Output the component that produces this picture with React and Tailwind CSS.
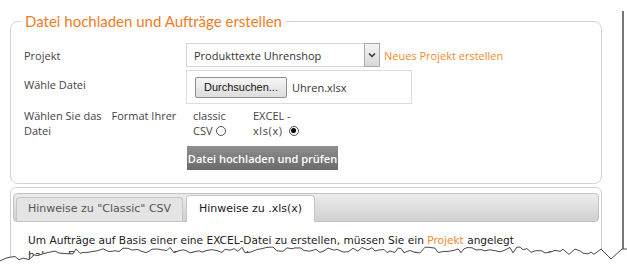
import React from "react";

function Radio({ checked }) {
  return (
    <span className="ml-[3px] inline-flex h-[10px] w-[10px] items-center justify-center rounded-full border border-[#555] bg-white">
      {checked && <span className="h-[5px] w-[5px] rounded-full bg-black" />}
    </span>
  );
}

function tornPoints() {
  const pts = [];
  let seed = 11;
  const rnd = () => {
    seed = (seed * 9301 + 49297) % 233280;
    return seed / 233280;
  };
  for (let x = 0; x <= 596; x += 3 + Math.floor(rnd() * 4)) {
    const base = 10 + 10 * Math.max(0, 1 - x / 90) + (x > 540 ? (x - 540) * 0.05 : 0);
    pts.push([x, base + (rnd() - 0.5) * 6]);
  }
  pts.push([601, 9], [611, 19], [622, 9], [627, 9]);
  return pts;
}

function TornEdge() {
  const pts = tornPoints();
  const line = pts.map((p) => p.join(",")).join(" ");
  const fill = line + " 627,27 0,27";
  return (
    <svg className="absolute left-0 top-[240px]" width="627" height="27" viewBox="0 0 627 27">
      <polygon points={fill} fill="#ffffff" />
      <polyline points={line} fill="none" stroke="#4a4a4a" strokeWidth="1" />
    </svg>
  );
}

export default function App() {
  return (
    <div className="relative h-[267px] w-[627px] overflow-hidden bg-white [font-family:'Open_Sans',sans-serif]">
      <div className="mt-[3px] h-[264px] w-[624px] border-r-2 border-[#777]">

        {/* ============ UPLOAD ============ */}
        <fieldset className="ml-[10px] mt-[11px] w-[592px] rounded-[8px] border border-[#d2d2d2] px-[13px] pb-[13px] pt-[12px]">
          <legend className="-ml-[3px] px-[4px] text-[15px] leading-[20px] text-[#f07d1f] [font-family:'Lato',sans-serif]">
            Datei hochladen und Aufträge erstellen
          </legend>

          <div className="grid grid-cols-[162px_1fr] gap-y-[3px] text-[11px] leading-[15px] text-[#444]">
            {/* projekt */}
            <div className="self-center">Projekt</div>
            <div className="flex items-center">
              <div className="flex h-[24px] w-[194px] items-center justify-between border border-[#d5d5d5] bg-white pl-[7px] text-[#333]">
                <span>Produkttexte Uhrenshop</span>
                <span className="-mr-px flex h-[24px] w-[16px] items-center justify-center border border-[#a8a8a8] bg-gradient-to-b from-[#f4f4f4] to-[#d8d8d8]">
                  <svg width="8" height="6" viewBox="0 0 8 6">
                    <path d="M1 1.5 L4 4.5 L7 1.5" fill="none" stroke="#333" strokeWidth="1.5" />
                  </svg>
                </span>
              </div>
              <a className="ml-[4px] text-[#f08a2e]">Neues Projekt erstellen</a>
            </div>

            {/* datei */}
            <div className="pt-[7px]">Wähle Datei</div>
            <div>
              <div className="flex h-[34px] w-[226px] items-center border border-[#dcdcdc] pl-[8px]">
                <span className="flex h-[21px] items-center rounded-[2px] border border-[#8e8e8e] bg-gradient-to-b from-[#f6f6f6] to-[#dddddd] px-[8px] text-[11px] text-[#111] [font-family:'Liberation_Sans',sans-serif]">
                  Durchsuchen...
                </span>
                <span className="ml-[5px] text-[#333]">Uhren.xlsx</span>
              </div>
            </div>

            {/* format */}
            <div className="pt-[1px]">
              <span>Wählen Sie das</span>
              <span className="ml-[10px]">Format Ihrer</span>
              <br />
              <span>Datei</span>
            </div>
            <div className="flex pl-[7px] pt-[1px]">
              <div className="w-[60px]">
                <div>classic</div>
                <div className="flex items-center">CSV<Radio /></div>
              </div>
              <div>
                <div>EXCEL -</div>
                <div className="flex items-center">
                  <span className="tracking-[0.6px]">xls(x)</span>
                  <span className="ml-[3px] flex"><Radio checked /></span>
                </div>
              </div>
            </div>

            {/* button */}
            <div />
            <div className="pt-[5px]">
              <button className="ml-[1px] h-[24px] w-[151px] bg-gradient-to-b from-[#8f8f8f] to-[#6a6a6a] text-[11px] font-semibold text-white">
                Datei hochladen und prüfen
              </button>
            </div>
          </div>
        </fieldset>

        {/* ============ TABS ============ */}
        <div className="ml-[10px] mt-[3px] h-[100px] w-[592px] rounded-t-[6px] border border-[#cfcfcf] px-[2px] pt-[5px] [font-family:'DejaVu_Sans',sans-serif]">
          <div className="flex h-[29px] items-end gap-[3px] rounded-[4px] border border-[#c2c2c2] bg-gradient-to-b from-[#ececec] to-[#d0d0d0] pl-[2px]">
            <div className="flex h-[24px] w-[167px] items-center justify-center rounded-t-[4px] border border-b-0 border-[#c6c6c6] bg-[#e4e4e4] text-[11px] text-[#555]">
              Hinweise zu "Classic" CSV
            </div>
            <div className="-mb-px flex h-[27px] w-[129px] items-center justify-center rounded-t-[4px] border border-b-0 border-[#c6c6c6] bg-white text-[11px] text-[#222]">
              Hinweise zu .xls(x)
            </div>
          </div>
          <div className="px-[15px] pt-[11px] text-[10.6px] leading-[15px] text-[#222]">
            Um Aufträge auf Basis einer eine EXCEL-Datei zu erstellen, müssen Sie ein{" "}
            <span className="text-[#f08a2e]">Projekt</span> angelegt
            <br />
            haben. Das Projekt legt die Textart, den Umfang und die Sprache der Texte fest, die Sie über Aufträge bestellen.
          </div>
        </div>
      </div>

      <TornEdge />
    </div>
  );
}
